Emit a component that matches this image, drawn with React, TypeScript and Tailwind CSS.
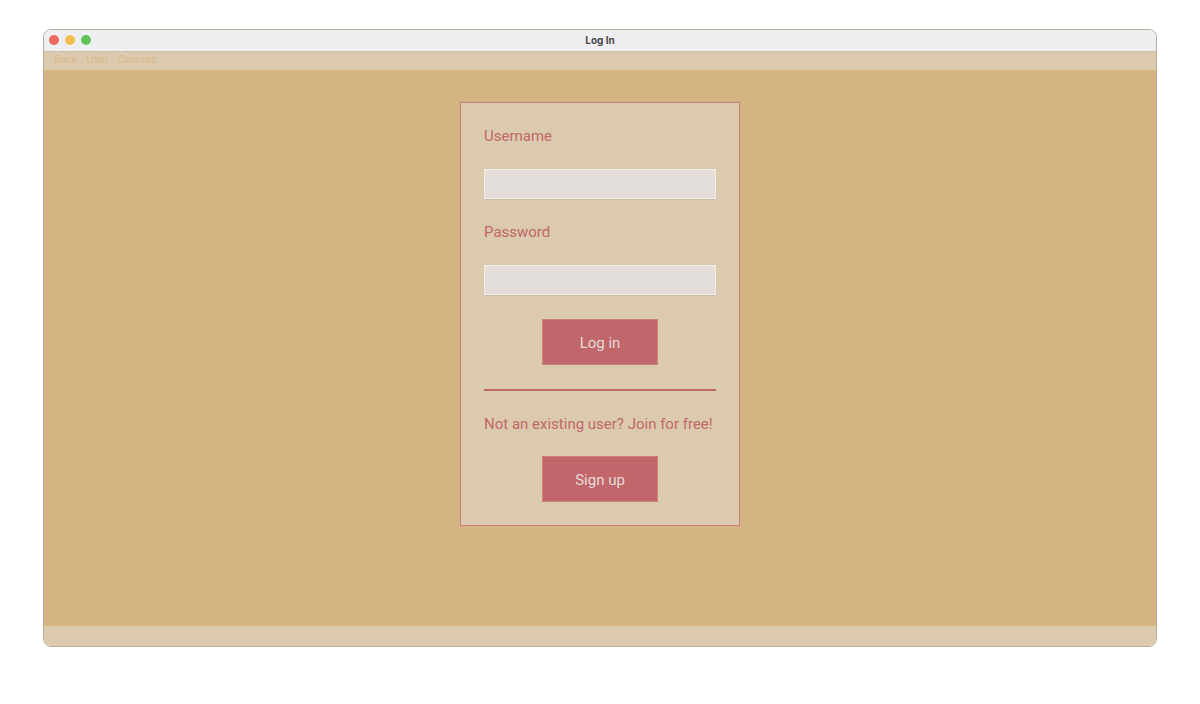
import { useState } from "react";
import type { FormEvent, ReactNode } from "react";

function TitleBar({ title }: { title: string }) {
  return (
    <header className="grid h-[21px] shrink-0 grid-cols-[1fr_auto_1fr] items-start bg-[#efeff2] px-[5px] pt-[5px]">
      <div className="flex gap-[6px]">
        <button type="button" aria-label="Close" className="size-[10px] rounded-full bg-[#ec6a5e]" />
        <button type="button" aria-label="Minimize" className="size-[10px] rounded-full bg-[#f4bf50]" />
        <button type="button" aria-label="Zoom" className="size-[10px] rounded-full bg-[#61c455]" />
      </div>
      <h1 className="text-[10px] leading-[10px] font-bold text-[#484848]">{title}</h1>
    </header>
  );
}

function MenuBar() {
  return (
    <nav className="flex h-[19px] shrink-0 items-start gap-[9px] border-t border-[#cbbfae] bg-[#dbcaae] px-[10px] text-[10px] leading-[14px] text-[#dab88a]">
      <button type="button">Back</button>
      <button type="button">User</button>
      <button type="button">Courses</button>
    </nav>
  );
}

function Field({ id, type, children }: { id: string; type: string; children: ReactNode }) {
  const [value, setValue] = useState("");
  return (
    <div className="flex flex-col gap-[23px]">
      <label htmlFor={id} className="leading-5">
        {children}
      </label>
      <input
        id={id}
        type={type}
        value={value}
        onChange={(event) => setValue(event.target.value)}
        className="h-[30px] w-full border border-[#f1eeec] bg-[#e3deda] px-2 shadow-[0_1px_0_#cdbda2] outline-none"
      />
    </div>
  );
}

function ActionButton({ type, children }: { type: "submit" | "button"; children: ReactNode }) {
  return (
    <button
      type={type}
      className="h-[46px] w-[116px] self-center border border-[#cc8078] bg-[#c1666b] pt-[2px] text-[#e5dcd8]"
    >
      {children}
    </button>
  );
}

export default function App() {
  const submit = (event: FormEvent) => event.preventDefault();

  return (
    <div className="flex min-h-screen flex-col bg-white px-[43px] pt-[29px] pb-[57px] font-['Inter',sans-serif]">
      <div className="flex flex-1 flex-col overflow-hidden rounded-lg border border-[#b9ac98]">
        <TitleBar title="Log In" />
        <MenuBar />
        <main className="flex flex-1 flex-col items-center bg-[#d4b483] px-4 py-8">
          <form
            onSubmit={submit}
            className="flex w-[280px] flex-col border border-[#cc7e7c] bg-[#dbcaae] p-[23px] font-['Roboto',sans-serif] text-[15px] text-[#c1666b]"
          >
            <div className="flex flex-col gap-[23px]">
              <Field id="username" type="text">
                Username
              </Field>
              <Field id="password" type="password">
                Password
              </Field>
            </div>
            <div className="mt-6 flex flex-col">
              <ActionButton type="submit">Log in</ActionButton>
            </div>
            <hr className="mt-6 border-t-2 border-[#c1666b]" />
            <div className="mt-[23px] flex flex-col gap-[22px]">
              <p className="leading-5 whitespace-nowrap">Not an existing user? Join for free!</p>
              <ActionButton type="button">Sign up</ActionButton>
            </div>
          </form>
        </main>
        <footer className="h-5 shrink-0 bg-[#dbcaae]" />
      </div>
    </div>
  );
}
